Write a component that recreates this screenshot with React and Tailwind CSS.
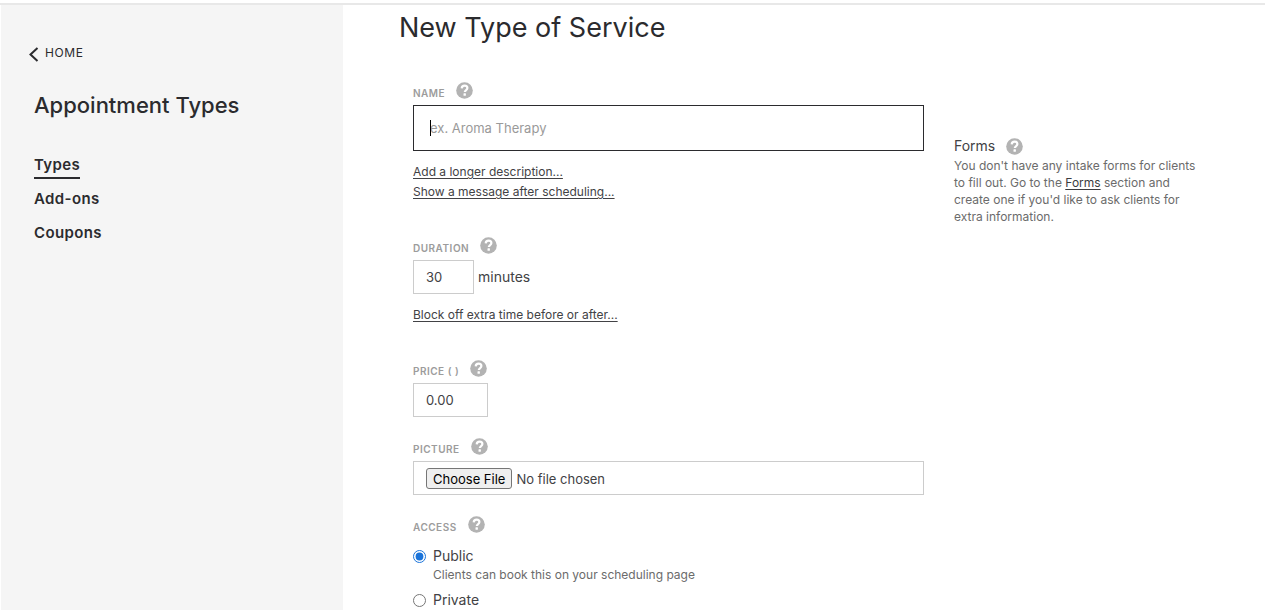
import React, { useState } from "react";
import clsx from "clsx";

const NAV_ITEMS = [
  { label: "Types", active: true },
  { label: "Add-ons", active: false },
  { label: "Coupons", active: false },
];

const ACCESS_OPTIONS = [
  {
    value: "public",
    label: "Public",
    hint: "Clients can book this on your scheduling page",
  },
  { value: "private", label: "Private" },
];

const HelpButton = ({ topic }) => (
  <button type="button" aria-label={`Help: ${topic}`} className="shrink-0">
    <svg width="17" height="17" viewBox="0 0 17 17" className="block">
      <circle cx="8.5" cy="8.5" r="8.3" fill="#b3b3b3" />
      <path
        d="M5.7 6.4C5.8 4.6 7 3.7 8.6 3.7c1.6 0 2.8.9 2.8 2.4 0 2-2.6 1.9-2.6 4"
        fill="none"
        stroke="#fff"
        strokeWidth="2.2"
      />
      <rect x="7.5" y="11.3" width="2.4" height="2.4" rx="0.5" fill="#fff" />
    </svg>
  </button>
);

const FieldLabel = ({ id, htmlFor, children, topic }) => (
  <div className="flex h-6 items-start gap-[11px] pt-px">
    <label
      id={id}
      htmlFor={htmlFor}
      className="pt-[3px] text-[10px] leading-4 font-semibold tracking-wider text-[#9c9c9c] uppercase"
    >
      {children}
    </label>
    <HelpButton topic={topic} />
  </div>
);

const TextLink = ({ children }) => (
  <a href="#" className="underline underline-offset-2">
    {children}
  </a>
);

const Sidebar = () => (
  <aside className="ml-px w-[342px] shrink-0 bg-[#f5f5f5] pt-[38px] pl-[27px] text-[#2b2b2e]">
    <a href="#" className="flex items-center gap-[6px] text-xs leading-5 tracking-wider">
      <svg width="11" height="15" viewBox="0 0 11 15" className="mt-[3px]">
        <path d="M9.5 1 2.5 7.5l7 6.5" fill="none" stroke="currentColor" strokeWidth="2" />
      </svg>
      HOME
    </a>

    <div className="pl-[6px]">
      <h2 className="mt-[26px] text-[22px] leading-8 font-medium">Appointment Types</h2>

      <nav className="mt-[34px] flex flex-col items-start gap-[10px]">
        {NAV_ITEMS.map((item) => (
          <a
            key={item.label}
            href="#"
            className={clsx(
              "h-6 border-b-2 text-[15px] leading-5 font-semibold tracking-wide",
              item.active ? "border-[#2b2b2e]" : "border-transparent"
            )}
          >
            {item.label}
          </a>
        ))}
      </nav>
    </div>
  </aside>
);

const FormsPanel = () => (
  <section className="mt-[55px] w-[242px] shrink-0">
    <div className="flex items-center gap-[11px]">
      <h2 className="text-sm leading-5">Forms</h2>
      <HelpButton topic="forms" />
    </div>
    <p className="mt-px text-xs leading-[17px] text-[#6b6b6b]">
      You don't have any intake forms for clients to fill out. Go to the{" "}
      <a href="#" className="text-[#3c3c3f] underline underline-offset-2">
        Forms
      </a>{" "}
      section and create one if you'd like to ask clients for extra information.
    </p>
  </section>
);

const App = () => {
  const [formData, setFormData] = useState({
    name: "",
    duration: "30",
    price: "0.00",
    access: "public",
  });

  const handleChange = (e) => {
    const { name, value } = e.target;
    setFormData((prev) => ({ ...prev, [name]: value }));
  };

  return (
    <div className="flex h-screen flex-col overflow-hidden bg-white pt-[3px] font-['Inter','Liberation_Sans',sans-serif] text-[#424245]">
      <div className="h-[2px] shrink-0 bg-[#e8e8e8]" />

      <div className="flex min-h-0 flex-1">
        <Sidebar />

        <main className="min-w-0 flex-1 pl-14">
          <h1 className="mt-[7px] text-[27px] leading-8 text-[#2b2b2e]">New Type of Service</h1>

          <div className="mt-[37px] flex items-start gap-[30px] pr-[69px] pl-[14px]">
            <form className="min-w-0 flex-1" onSubmit={(e) => e.preventDefault()}>
              {/* Name */}
              <FieldLabel htmlFor="name" topic="name">
                Name
              </FieldLabel>
              <div className="relative">
                <input
                  id="name"
                  name="name"
                  type="text"
                  value={formData.name}
                  onChange={handleChange}
                  placeholder="ex. Aroma Therapy"
                  className="block h-[46px] w-full border border-[#2b2b2e] px-4 text-[13px] outline-none placeholder:text-[#9a9a9a]"
                />
                {!formData.name && (
                  <span className="pointer-events-none absolute top-[15px] left-[17px] h-4 w-px bg-black" />
                )}
              </div>
              <div className="mt-[11px] flex flex-col items-start text-xs leading-5">
                <TextLink>Add a longer description...</TextLink>
                <TextLink>Show a message after scheduling...</TextLink>
              </div>

              {/* Duration */}
              <div className="mt-[34px]">
                <FieldLabel htmlFor="duration" topic="duration">
                  Duration
                </FieldLabel>
                <div className="flex items-center gap-1">
                  <input
                    id="duration"
                    name="duration"
                    type="text"
                    value={formData.duration}
                    onChange={handleChange}
                    className="h-[34px] w-[61px] border border-[#cccccc] px-3 text-[13px]"
                  />
                  <span className="text-sm leading-5">minutes</span>
                </div>
                <div className="mt-[11px] text-xs leading-5">
                  <TextLink>Block off extra time before or after...</TextLink>
                </div>
              </div>

              {/* Price */}
              <div className="mt-[34px]">
                <FieldLabel htmlFor="price" topic="price">
                  Price ( )
                </FieldLabel>
                <input
                  id="price"
                  name="price"
                  type="text"
                  value={formData.price}
                  onChange={handleChange}
                  className="block h-[34px] w-[75px] border border-[#cccccc] px-3 text-[13px]"
                />
              </div>

              {/* Picture */}
              <div className="mt-5">
                <FieldLabel htmlFor="picture" topic="picture">
                  Picture
                </FieldLabel>
                <input
                  id="picture"
                  name="picture"
                  type="file"
                  className="block h-[34px] w-full border border-[#cccccc] px-3 py-[6px] text-[13px] leading-5 file:mr-1 file:h-[21px] file:rounded-[3px] file:border file:border-solid file:border-[#767676] file:bg-[#efefef] file:px-[6px] file:text-[13px] file:leading-4 file:text-black"
                />
              </div>

              {/* Access */}
              <div className="mt-5" role="radiogroup" aria-labelledby="access-label">
                <FieldLabel id="access-label" topic="access">
                  Access
                </FieldLabel>
                <div className="mt-[7px] space-y-[7px]">
                  {ACCESS_OPTIONS.map((option) => (
                    <div key={option.value}>
                      <label className="flex items-center gap-[7px] text-sm leading-5">
                        <input
                          type="radio"
                          name="access"
                          value={option.value}
                          checked={formData.access === option.value}
                          onChange={handleChange}
                          className="size-[13px] accent-[#1a73d9]"
                        />
                        {option.label}
                      </label>
                      {option.hint && (
                        <p className="pl-5 text-xs leading-[17px] text-[#6b6b6b]">{option.hint}</p>
                      )}
                    </div>
                  ))}
                </div>
              </div>
            </form>

            <FormsPanel />
          </div>
        </main>
      </div>
    </div>
  );
};

export default App;
